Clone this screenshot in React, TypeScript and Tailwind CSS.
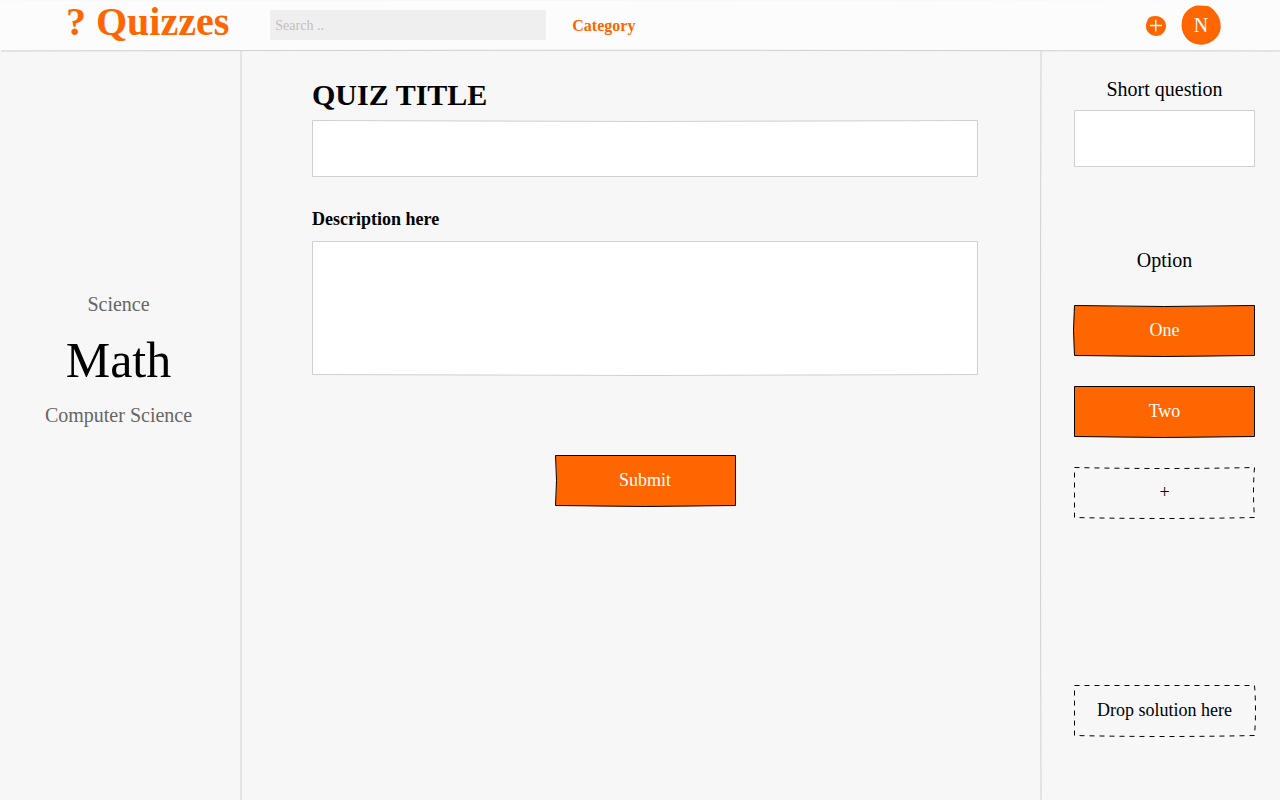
import React from "react";

type FrameProps = {
  path: string;
  width: number;
  height: number;
  className: string;
  dash?: string;
};

/** Hand-drawn outline that stretches behind the control it belongs to. */
function Frame({ path, width, height, className, dash }: FrameProps) {
  return (
    <svg
      aria-hidden="true"
      viewBox={`0 0 ${width} ${height}`}
      preserveAspectRatio="none"
      className={`pointer-events-none absolute inset-0 h-full w-full overflow-visible ${className}`}
    >
      <path d={path} strokeDasharray={dash} vectorEffect="non-scaling-stroke" />
    </svg>
  );
}

type SketchButtonProps = {
  label: string;
  path: string;
  dashed?: boolean;
  className?: string;
};

function SketchButton({ label, path, dashed = false, className = "" }: SketchButtonProps) {
  return (
    <button
      type="button"
      className={`relative h-[51px] cursor-pointer pb-px text-lg leading-6 ${
        dashed ? "text-black" : "text-white"
      } ${className}`}
    >
      <Frame
        path={path}
        width={181}
        height={51}
        dash={dashed ? "5 5" : undefined}
        className={dashed ? "fill-none stroke-black" : "fill-[#ff6600] stroke-black"}
      />
      <span className="relative">{label}</span>
    </button>
  );
}

const fieldFrame = "fill-white stroke-[#d0d0d0]";

function Header() {
  return (
    <header className="relative flex h-[50px] items-center bg-[#fcfcfc] pr-[59px] pl-[66px]">
      <svg
        aria-hidden="true"
        viewBox="0 0 1280 52"
        preserveAspectRatio="none"
        className="pointer-events-none absolute inset-x-0 top-0 h-[52px] w-full fill-none"
      >
        <path d="M0 0H1280Q640 1.5 0 .5Z" className="fill-[#f7f7f7]" />
        <path d="M1 51Q500 50 800 50.4T1280 51" className="stroke-[#d0d0d0]" />
      </svg>
      <a href="#home" className="self-start text-[40px] leading-[44px] font-bold text-[#ff6600]">
        ? Quizzes
      </a>
      <input
        type="search"
        aria-label="Search"
        placeholder="Search .."
        className="ml-[41px] h-[30px] w-[276px] bg-[#efefef] px-[5px] pt-[2px] text-sm text-black outline-none placeholder:text-[#c0c0c0]"
      />
      <a href="#category" className="ml-[26px] pt-[2px] text-base leading-6 font-bold text-[#ff6600]">
        Category
      </a>
      <div className="ml-auto flex items-center gap-[15px]">
        <button type="button" aria-label="New quiz" className="cursor-pointer">
          <svg viewBox="0 0 20 20" className="mt-px block h-5 w-5">
            <path
              d="M9.5 0C13 0 15.5 1.3 17.5 3.6C19.3 5.8 20.2 8 20 10.6C19.7 13.6 18.6 15.8 16.6 17.6C14.6 19.5 12.4 20 9.8 20C6.7 19.9 4.4 18.6 2.4 16.6C.6 14.7 0 12.6 0 10C.1 7 .9 4.8 2.4 2.5C4 .6 6.3 .1 9.5 0Z"
              className="fill-[#ff6600]"
            />
            <path
              d="M4 9.5H16M9.7 3.7V15.5"
              strokeWidth="1.4"
              className="fill-none stroke-white"
            />
          </svg>
        </button>
        <button
          type="button"
          aria-label="Account N"
          className="relative h-10 w-10 cursor-pointer text-xl leading-6 text-white"
        >
          <svg aria-hidden="true" viewBox="0 0 40 40" className="absolute inset-0 h-10 w-10">
            <path
              d="M14.5 .8C18.5 .2 22 .6 26.5 1C31 2 35.5 7.5 38 12.5C39.6 17 40.2 21 39.2 25.5C37.8 30 35.5 33.2 31.5 36C27.5 38.6 24 39.7 20 39.7C14.5 39.3 10 37.8 6.5 34.5C3 30.8 .8 26.5 .6 21.5C.4 17 1.2 12.5 3.4 9C6.5 4.8 10 2 14.5 .8Z"
              className="fill-[#ff6600]"
            />
          </svg>
          <span className="relative">N</span>
        </button>
      </div>
    </header>
  );
}

function Subjects() {
  return (
    <nav
      aria-label="Subjects"
      className="relative flex w-[242px] shrink-0 flex-col items-center pt-[242px] pr-[5px] text-xl leading-6 text-[#666666]"
    >
      <a href="#science">Science</a>
      <a
        href="#math"
        aria-current="page"
        className="mt-4 mb-[15px] text-[50px] leading-[56px] text-black"
      >
        Math
      </a>
      <a href="#computer-science">Computer Science</a>
      <svg
        aria-hidden="true"
        viewBox="0 0 2 750"
        preserveAspectRatio="none"
        className="absolute top-0 right-0 h-full w-[2px] fill-none stroke-[#d0d0d0]"
      >
        <path d="M1 1V750" />
      </svg>
    </nav>
  );
}

function QuizForm() {
  return (
    <main className="flex min-w-0 flex-1 flex-col pt-[27px] pr-[62px] pb-10 pl-[70px]">
      <h1 className="text-3xl leading-9 font-bold">
        <label htmlFor="quiz-title">QUIZ TITLE</label>
      </h1>
      <div className="relative mt-[7px] h-[57px]">
        <Frame
          path="M.5 .5Q333 2.5 665.5 .5V56.5H.5Z"
          width={666}
          height={57}
          className={fieldFrame}
        />
        <input
          id="quiz-title"
          type="text"
          className="relative h-full w-full bg-transparent px-3 text-xl outline-none"
        />
      </div>
      <label htmlFor="quiz-description" className="mt-[30px] text-lg leading-6 font-bold">
        Description here
      </label>
      <div className="relative mt-[10px] h-[134px]">
        <Frame
          path="M.5 .5H665.5V133.5Q333 135.5 .5 133.5Z"
          width={666}
          height={134}
          className={fieldFrame}
        />
        <textarea
          id="quiz-description"
          className="relative block h-full w-full resize-none bg-transparent p-3 text-lg outline-none"
        />
      </div>
      <SketchButton
        label="Submit"
        path="M.5 .5H180.5V50.5Q90 52.5 .5 50.5Q2.5 25 .5 .5Z"
        className="mt-20 w-[181px] self-center"
      />
    </main>
  );
}

function QuestionPanel() {
  return (
    <aside className="relative flex w-60 shrink-0 flex-col pt-[27px] pr-[25px] pb-10 pl-[34px]">
      <svg
        aria-hidden="true"
        viewBox="0 0 2 750"
        preserveAspectRatio="none"
        className="absolute top-0 left-0 h-full w-[2px] fill-none stroke-[#d0d0d0]"
      >
        <path d="M1 1Q.5 190 .5 375T1 750" />
      </svg>
      <label htmlFor="short-question" className="text-center text-xl leading-6">
        Short question
      </label>
      <div className="relative mt-[9px] h-[57px]">
        <Frame path="M.5 .5H180.5V56.5H.5Z" width={181} height={57} className={fieldFrame} />
        <input
          id="short-question"
          type="text"
          className="relative h-full w-full bg-transparent px-3 text-lg outline-none"
        />
      </div>
      <h2 className="mt-[81px] text-center text-xl leading-6">Option</h2>
      <div className="mt-[33px] flex flex-col gap-[30px]">
        <SketchButton
          label="One"
          path="M.5 .5Q90 2.5 180.5 .5V50.5Q90 52.5 .5 50.5Q-1.5 25 .5 .5Z"
        />
        <SketchButton label="Two" path="M.5 .5H180.5V50.5Q90 52.5 .5 50.5Z" />
        <SketchButton
          label="+"
          dashed
          path="M.5 .5Q90 2.5 180.5 .5Q178.5 25 180.5 50.5Q90 52.5 .5 50.5Z"
        />
      </div>
      <SketchButton
        label="Drop solution here"
        dashed
        path="M.5 .5H180.5Q182.5 25 180.5 50.5Q90 52.5 .5 50.5Z"
        className="mt-[167px]"
      />
    </aside>
  );
}

export default function App() {
  return (
    <div className="flex min-h-screen flex-col bg-[#f7f7f7] font-['Liberation_Serif',serif] text-black">
      <Header />
      <div className="flex flex-1">
        <Subjects />
        <QuizForm />
        <QuestionPanel />
      </div>
    </div>
  );
}
